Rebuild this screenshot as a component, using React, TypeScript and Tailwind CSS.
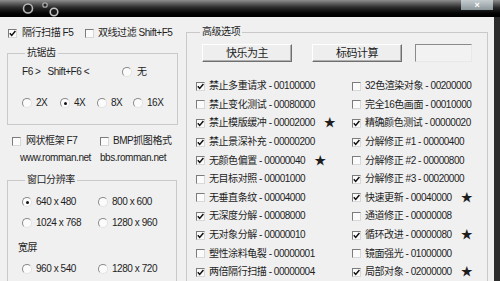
const COL1: [boolean, string, string, boolean?][] = [
  [true, "禁止多重请求", "00100000"],
  [false, "禁止变化测试", "00080000"],
  [true, "禁止模版缓冲", "00002000", true],
  [true, "禁止景深补充", "00000200"],
  [true, "无颜色偏置", "00000040", true],
  [false, "无目标对照", "00001000"],
  [false, "无垂直条纹", "00004000"],
  [true, "无深度分解", "00008000"],
  [true, "无对象分解", "00000010"],
  [false, "塑性涂料龟裂", "00000001"],
  [true, "两倍隔行扫描", "00000004"],
];

const COL2: [boolean, string, string, boolean?][] = [
  [false, "32色渲染对象", "00200000"],
  [false, "完全16色画面", "00010000"],
  [true, "精确颜色测试", "00000020"],
  [true, "分解修正 #1", "00000400"],
  [false, "分解修正 #2", "00000800"],
  [true, "分解修正 #3", "00020000"],
  [true, "快速更新", "00040000", true],
  [false, "通道修正", "00000008"],
  [true, "循环改进", "00000080", true],
  [false, "镜面强光", "01000000"],
  [true, "局部对象", "02000000", true],
];

function Check({ on }: { on?: boolean }) {
  return (
    <span className="inline-flex h-[9px] w-[9px] shrink-0 items-center justify-center border border-t-[#7c7c7c] border-l-[#7c7c7c] border-r-[#d8d8d8] border-b-[#d8d8d8] bg-[#fbfbfb]">
      {on && (
        <svg viewBox="0 0 7 7" className="h-[7px] w-[7px]">
          <path d="M0.8 3.2 L2.7 5.4 L6.4 0.9" stroke="#111" strokeWidth="1.5" fill="none" />
        </svg>
      )}
    </span>
  );
}

function Radio({ on }: { on?: boolean }) {
  return (
    <span className="inline-flex h-[10px] w-[10px] shrink-0 items-center justify-center rounded-full border border-t-[#8a8a8a] border-l-[#8a8a8a] border-r-[#e2e2e2] border-b-[#e2e2e2] bg-[#fbfbfb]">
      {on && <span className="h-[3px] w-[3px] rounded-full bg-[#111]" />}
    </span>
  );
}

function Opt({ on, label, code, star }: { on: boolean; label: string; code: string; star?: boolean }) {
  return (
    <div className="flex h-[18.6px] items-center gap-[4px] whitespace-nowrap">
      <Check on={on} />
      <span>
        {label} - {code}
      </span>
      {star && <span className="ml-[5px] text-[12px]">★</span>}
    </div>
  );
}

export default function App() {
  return (
    <div className="relative flex h-[281px] w-[500px] flex-col overflow-hidden bg-[#f0f0f0] font-['Liberation_Sans','Noto_Sans_CJK_SC',sans-serif] text-[10px] leading-[12px] tracking-[-0.45px] text-[#1e1e1e]">
      {/* title bar */}
      <div className="relative flex h-[17px] shrink-0 bg-linear-to-b from-[#8e8e8e] via-[#2a2a2a] via-45% to-black">
        <svg width="70" height="17" className="ml-[20px]">
          <circle cx="8" cy="8.5" r="4.5" fill="#1a1a1a" stroke="#b8b8b8" strokeWidth="1.6" />
          <circle cx="25" cy="5" r="2.2" fill="#222" stroke="#a8a8a8" strokeWidth="1.3" />
          <circle cx="34" cy="12" r="3.8" fill="#1a1a1a" stroke="#c4c4c4" strokeWidth="1.6" />
        </svg>
        <div className="absolute right-[7px] top-0 flex h-[10px] w-[32px] items-center justify-center bg-linear-to-b from-[#c6cdd0] to-[#8c979b] text-[9px] font-bold leading-none text-white">
          ×
        </div>
      </div>

      <div className="flex flex-1 border-r-[6px] border-r-[#2c2c2c]">
        {/* left column */}
        <div className="w-[186px] shrink-0">
          <div className="ml-[8px] mt-[10px] flex h-[12px] items-center whitespace-nowrap">
            <Check on />
            <span className="ml-[5px] w-[63px]">隔行扫描 F5</span>
            <Check />
            <span className="ml-[4px]">双线过滤 Shift+F5</span>
          </div>

          <fieldset className="ml-[7px] mt-[8px] h-[78px] w-[170px] border border-[#c9c9c9] px-[14px]">
            <legend className="ml-[3px] px-[2px]">抗锯齿</legend>
            <div className="mt-[7px] flex h-[12px] items-center whitespace-nowrap">
              <span className="w-[100px]">F6 &gt; &nbsp; Shift+F6 &lt;</span>
              <Radio />
              <span className="ml-[5px]">无</span>
            </div>
            <div className="mt-[19px] flex h-[12px] items-center whitespace-nowrap">
              <span className="flex w-[38px] items-center gap-[4px]"><Radio />2X</span>
              <span className="flex w-[37px] items-center gap-[4px]"><Radio on />4X</span>
              <span className="flex w-[36px] items-center gap-[4px]"><Radio />8X</span>
              <span className="flex items-center gap-[4px]"><Radio />16X</span>
            </div>
          </fieldset>

          <div className="ml-[12px] mt-[10px] flex h-[12px] items-center whitespace-nowrap">
            <Check />
            <span className="ml-[5px] w-[74px]">网状框架 F7</span>
            <Check />
            <span className="ml-[4px]">BMP抓图格式</span>
          </div>
          <div className="ml-[20px] mt-[5px] flex h-[12px] items-center whitespace-nowrap">
            <span className="w-[80px]">www.romman.net</span>
            <span>bbs.romman.net</span>
          </div>

          <fieldset className="ml-[7px] mt-[10px] h-[120px] w-[170px] border border-[#c9c9c9] px-[14px]">
            <legend className="ml-[3px] px-[2px]">窗口分辨率</legend>
            <div className="mt-[10px] flex h-[12px] items-center whitespace-nowrap">
              <span className="flex w-[76px] items-center gap-[4px]"><Radio on />640 x 480</span>
              <span className="flex items-center gap-[4px]"><Radio />800 x 600</span>
            </div>
            <div className="mt-[9px] flex h-[12px] items-center whitespace-nowrap">
              <span className="flex w-[76px] items-center gap-[4px]"><Radio />1024 x 768</span>
              <span className="flex items-center gap-[4px]"><Radio />1280 x 960</span>
            </div>
            <div className="-ml-[4px] mt-[13px] h-[12px]">宽屏</div>
            <div className="mt-[9px] flex h-[12px] items-center whitespace-nowrap">
              <span className="flex w-[76px] items-center gap-[4px]"><Radio />960 x 540</span>
              <span className="flex items-center gap-[4px]"><Radio />1280 x 720</span>
            </div>
          </fieldset>
        </div>

        {/* right group */}
        <fieldset className="mt-[9px] h-[300px] w-[302px] shrink-0 border border-[#c9c9c9] pl-[9px]">
          <legend className="ml-[4px] px-[2px]">高级选项</legend>
          <div className="mt-[6px] flex items-center">
            <button className="ml-[6px] h-[18px] w-[90px] border border-t-white border-l-white border-r-[#6f6f6f] border-b-[#6f6f6f] bg-[#eeeeee] text-[11px] shadow-[inset_-1px_-1px_0_#b0b0b0]">
              快乐为主
            </button>
            <button className="ml-[20px] h-[18px] w-[90px] border border-t-white border-l-white border-r-[#6f6f6f] border-b-[#6f6f6f] bg-[#eeeeee] text-[11px] shadow-[inset_-1px_-1px_0_#b0b0b0]">
              标码计算
            </button>
            <div className="ml-[13px] h-[18px] w-[57px] border border-t-[#8a8a8a] border-l-[#8a8a8a] border-r-[#e8e8e8] border-b-[#e8e8e8] bg-[#f2f2f2]" />
          </div>
          <div className="mt-[15px] grid grid-cols-[156px_1fr]">
            <div className="flex flex-col">
              {COL1.map(([on, l, c, s]) => (
                <Opt key={l} on={on} label={l} code={c} star={s} />
              ))}
            </div>
            <div className="flex flex-col">
              {COL2.map(([on, l, c, s]) => (
                <Opt key={l} on={on} label={l} code={c} star={s} />
              ))}
            </div>
          </div>
        </fieldset>
      </div>
    </div>
  );
}
